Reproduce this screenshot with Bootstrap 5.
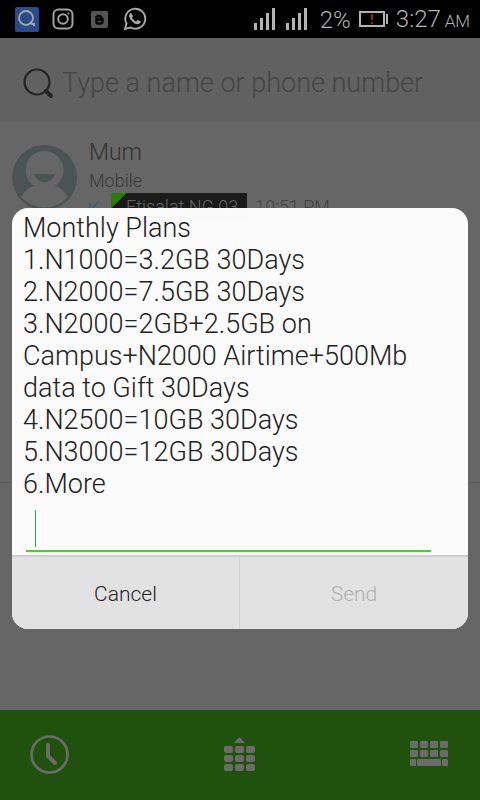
<!DOCTYPE html>
<html lang="en">
<head>
<meta charset="utf-8">
<meta name="viewport" content="width=device-width, initial-scale=1">
<title>Dialer</title>
<link href="https://cdn.jsdelivr.net/npm/bootstrap@5.3.0/dist/css/bootstrap.min.css" rel="stylesheet">
<style>
  body { font-family: Roboto, "Liberation Sans", sans-serif; font-weight: 300; background: #666; color: #333; }
  svg { display: block; flex: none; }
  .status-bar { background: #000; color: #b4b4b4; height: 38px; padding: 0 10px 0 14px; }
  .status-bar .clock { font-size: 24px; line-height: 38px; padding-top: 2px; }
  .status-bar .meridiem { font-size: 17px; margin-left: -2px; }
  .search-row { background: #616161; height: 84px; padding: 6px 20px 0 22px; }
  .search-row input { background: none; border: 0; outline: 0; padding: 0; color: #333; font-size: 27px; font-weight: 300; min-width: 0; }
  .search-row input::placeholder { color: #454545; opacity: 1; }
  .call-entry { padding: 15px 12px 0; height: 361px; border-bottom: 1px solid #5b5b5b; }
  .call-name { font-size: 23px; line-height: 32px; }
  .call-kind { font-size: 18px; line-height: 24px; color: #3a3a3a; }
  .call-meta { font-size: 18px; line-height: 28px; color: #444; }
  .sim-tag { background: linear-gradient(135deg, #2c7d06 11px, #1a1a1a 11px); color: #666; padding: 0 9px 0 15px; }
  .contacts-link { color: #444; font-size: 26px; line-height: 40px; padding-top: 30px; text-decoration: none; }
  .tab-bar { background: #20520e; height: 90px; padding: 0 32px 2px 30px; }
  .tab-bar button { background: none; border: 0; padding: 0; }
  .dialog-layer { inset: 36px 0 0; padding: 0 12px; }
  .ussd-dialog { background: rgba(254, 254, 254, .985); border-radius: 16px; }
  .ussd-text { font-size: 27px; line-height: 32px; color: #222; padding: 4px 40px 0 11px; }
  .reply-wrap { padding: 0 37px 3px 14px; }
  .reply-field { background: none; border: 0; border-bottom: 2px solid #4fce30; border-radius: 0; outline: 0; height: 52px; padding: 0 9px; font-size: 27px; font-weight: 300; color: #222; caret-color: transparent; }
  .text-caret { left: 23px; top: 10px; width: 1px; height: 37px; background: #2fae48; }
  .dialog-actions { border-top: 2px solid #cfcfcf; background: #e2e2e2; }
  .dialog-actions button { background: none; border: 0; height: 72px; padding: 4px 0 0; font-size: 21px; font-weight: 300; color: #222; }
  .dialog-actions button:first-child { border-right: 1px solid #d2d2d2; }
  .dialog-actions button:disabled { color: #b1b1b1; }
</style>
</head>
<body>
<div class="d-flex flex-column min-vh-100 position-relative">
  <header class="status-bar d-flex align-items-center justify-content-between">
    <div class="d-flex align-items-center">
      <svg width="26" height="26" viewBox="0 0 26 26" fill="none" stroke="#a6a6a6"><rect x="1" y="1" width="24" height="25" rx="2" fill="#294b8b" stroke="none"/><circle cx="12" cy="12" r="7" stroke-width="1.8"/><path d="M16 16l2 2h2v2" stroke-width="2"/></svg>
      <svg class="ms-2" width="30" height="22" viewBox="0 0 30 22" fill="none" stroke="#a0a0a0" stroke-width="2"><rect x="5.500" y="1.500" width="19" height="19" rx="5"/><circle cx="15" cy="11" r="4.800"/><circle cx="20.500" cy="5.500" r=".7" stroke-width="1"/></svg>
      <svg class="ms-2 me-1" width="25" height="17" viewBox="0 0 25 17"><g transform="translate(5 0)"><rect width="17" height="17" rx="2" fill="#555"/><path fill="none" stroke="#000" stroke-width="2.400" d="M5.500 5H8.500a1.500 1.500 0 0 1 1.500 1.500V8h1.500v2.500a2 2 0 0 1-2 2h-3a1 1 0 0 1-1-1V5M5.500 8.500H10"/></g></svg>
      <svg class="ms-2" width="24" height="24" viewBox="0 0 24 24"><path fill="none" stroke="#a8a8a8" stroke-width="1.900" d="M2 22l1.500-5.500A10 10 0 1 1 7.500 20.500z"/><path fill="#a8a8a8" d="M8.500 6.500c-.5-.6-1-.5-1.500 0-1.700 1.700-1 4 .7 6.200 2 2.700 4.300 4.300 6.800 4.600 1.600.1 3-.9 3.200-2.500 0-.6-2.700-2-3.200-1.700l-1.200 1.400c-.5.3-3.700-2.100-4.200-3.700-.1-.6 1-1.200.9-1.800z"/></svg>
    </div>
    <div class="d-flex align-items-center">
      <svg width="54" height="22" viewBox="0 0 54 22" fill="#b4b4b4"><path d="M0 15h3v7H0zM6 10h3v12H6zM12 5h3v17h-3zM18 0h3v22h-3zM32 15h3v7h-3zM38 10h3v12h-3zM44 5h3v17h-3zM50 0h3v22h-3z"/></svg>
      <span class="clock ps-2 ms-1">2%</span>
      <svg class="ms-2" width="29" height="16" viewBox="0 0 29 16"><rect x="1" y="1" width="24" height="14" fill="none" stroke="#b4b4b4" stroke-width="2"/><path fill="#b4b4b4" d="M27 3h2v10h-2z"/><path fill="#a41d0c" d="M12 3h2v6h-2zM12 11h2v2h-2z"/></svg>
      <span class="clock ms-2">3:27 <span class="meridiem">AM</span></span>
    </div>
  </header>

  <label class="search-row d-flex align-items-center gap-2" for="search">
    <svg width="32" height="32" viewBox="0 0 32 32" fill="none" stroke="#242424"><circle cx="15" cy="15" r="12.500" stroke-width="2.200"/><path d="M24 24l5 5" stroke-width="4" stroke-linecap="round"/></svg>
    <input id="search" class="flex-grow-1" type="text" placeholder="Type a name or phone number" autocomplete="off">
  </label>

  <main class="flex-grow-1">
    <section class="call-entry d-flex align-items-start">
      <svg class="mt-2" width="65" height="65" viewBox="0 0 65 65"><circle cx="32.500" cy="32.500" r="32.500" fill="#4b5353"/><circle cx="32.500" cy="25" r="19" fill="#666"/><path fill="#666" d="M22 40h21v1c6 2 10 6 13 11A31.500 31.500 0 0 1 9 52c3-5 7-9 13-11z"/><path fill="#4b5353" d="M22 29h21c-4 11-17 11-21 0z"/></svg>
      <div class="ps-2 ms-1">
        <div class="call-name">Mum</div>
        <div class="call-kind">Mobile</div>
        <div class="call-meta d-flex align-items-center">
          <svg width="22" height="14" viewBox="0 0 22 14" fill="none" stroke="#316477" stroke-width="1.500"><path d="M10 1L1 11M1 3v8h8"/></svg>
          <span class="sim-tag">Etisalat NG 03</span>
          <span class="ms-2">10:51 PM</span>
        </div>
      </div>
    </section>
    <a class="contacts-link d-flex justify-content-center gap-3" href="#contacts">
      <svg width="36" height="40" viewBox="0 0 36 40" fill="#505050"><circle cx="18" cy="14" r="12"/><path d="M2 40c2-18 30-18 32 0z"/></svg>
      All contacts
    </a>
  </main>

  <nav class="tab-bar d-flex align-items-center justify-content-between" aria-label="Dialer">
    <button type="button" aria-label="Recent calls"><svg width="39" height="39" viewBox="0 0 39 39" fill="none" stroke="#6b6b6b"><circle cx="19.500" cy="19.500" r="18" stroke-width="2.600"/><path d="M18 10v11l7 7" stroke-width="4" stroke-linecap="round" stroke-linejoin="round"/></svg></button>
    <button type="button" aria-label="Keypad"><svg width="31" height="35" viewBox="0 0 31 35" fill="#6b6b6b"><path d="M10 6l4.500-5q1-1 2 0L21 6z"/><g id="keys"><rect y="9" width="9" height="7" rx="2"/><rect x="11" y="9" width="9" height="7" rx="2"/><rect x="22" y="9" width="9" height="7" rx="2"/></g><use href="#keys" y="9"/><use href="#keys" y="18"/></svg></button>
    <button type="button" aria-label="Keyboard"><svg width="38" height="26" viewBox="0 0 38 26" fill="#6b6b6b"><g id="row"><rect width="8" height="7" rx="1"/><rect x="10" width="8" height="7" rx="1"/><rect x="20" width="8" height="7" rx="1"/><rect x="30" width="8" height="7" rx="1"/></g><use href="#row" y="9"/><rect y="18" width="6" height="7" rx="1"/><rect x="7" y="18" width="24" height="7" rx="1"/><rect x="32" y="18" width="6" height="7" rx="1"/></svg></button>
  </nav>

  <div class="dialog-layer position-absolute d-flex align-items-center">
    <form class="ussd-dialog w-100 overflow-hidden" role="dialog" aria-labelledby="plans">
      <div class="ussd-text" id="plans">
        <div>Monthly Plans</div>
        <div>1.N1000=3.2GB 30Days</div>
        <div>2.N2000=7.5GB 30Days</div>
        <div>3.N2000=2GB+2.5GB on Campus+N2000 Airtime+500Mb data to Gift 30Days</div>
        <div>4.N2500=10GB 30Days</div>
        <div>5.N3000=12GB 30Days</div>
        <div>6.More</div>
      </div>
      <div class="reply-wrap position-relative">
        <input class="reply-field w-100 d-block" type="text" aria-label="Reply" autocomplete="off">
        <span class="text-caret position-absolute"></span>
      </div>
      <div class="dialog-actions d-flex">
        <button class="w-50" type="button">Cancel</button>
        <button class="w-50" type="submit" disabled>Send</button>
      </div>
    </form>
  </div>
</div>
<script src="https://cdn.jsdelivr.net/npm/bootstrap@5.3.0/dist/js/bootstrap.bundle.min.js"></script>
</body>
</html>
